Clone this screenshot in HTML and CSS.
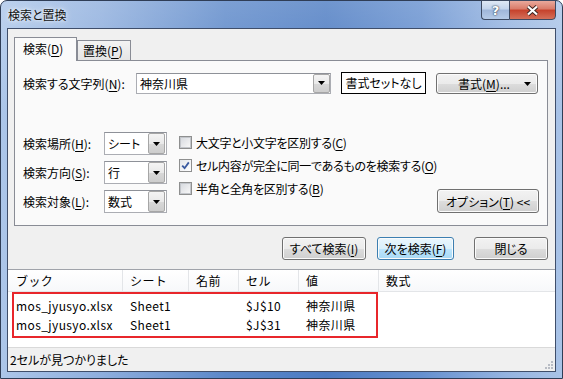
FILE: index.html
```html
<!DOCTYPE html>
<html>
<head>
    <title>検索と置換</title>
<link rel="stylesheet" href="styles.css">
</head>
<body>
    <div class="window">
        <div class="titlebar">
            <span class="title">検索と置換</span>
            <div class="caption">
                <span class="cap help">?</span>
                <span class="cap close">
                    <svg width="13" height="11" viewBox="0 0 13 11"><path d="M2 1.5 L11 9.5 M11 1.5 L2 9.5" stroke="#3a2420" stroke-width="4"/><path d="M2 1.5 L11 9.5 M11 1.5 L2 9.5" stroke="#fff" stroke-width="2.2"/></svg>
                </span>
            </div>
        </div>

        <div class="client">
            <div class="upper">
                <div class="tabs">
                    <div class="tab active">検索(<u>D</u>)</div>
                    <div class="tab">置換(<u>P</u>)</div>
                </div>

                <div class="panel">
                    <div class="find-row">
                        <label class="find-label">検索する文字列(<u>N</u>):</label>
                        <div class="combo find-combo">
                            <span class="combo-text">神奈川県</span>
                            <span class="drop"><svg width="7" height="4" viewBox="0 0 7 4"><polygon points="0,0 7,0 3.5,4" fill="#000"/></svg></span>
                        </div>
                        <div class="fmt-preview">書式セットなし</div>
                        <button class="btn fmt-btn">書式(<u>M</u>)...<svg class="fmt-arrow" width="7" height="4" viewBox="0 0 7 4"><polygon points="0,0 7,0 3.5,4" fill="#000"/></svg></button>
                    </div>

                    <div class="options">
                        <div class="fields">
                            <label>検索場所(<u>H</u>):</label>
                            <div class="combo"><span class="combo-text">シート</span><span class="drop"><svg width="7" height="4" viewBox="0 0 7 4"><polygon points="0,0 7,0 3.5,4" fill="#000"/></svg></span></div>
                            <label>検索方向(<u>S</u>):</label>
                            <div class="combo"><span class="combo-text">行</span><span class="drop"><svg width="7" height="4" viewBox="0 0 7 4"><polygon points="0,0 7,0 3.5,4" fill="#000"/></svg></span></div>
                            <label>検索対象(<u>L</u>):</label>
                            <div class="combo"><span class="combo-text">数式</span><span class="drop"><svg width="7" height="4" viewBox="0 0 7 4"><polygon points="0,0 7,0 3.5,4" fill="#000"/></svg></span></div>
                        </div>

                        <div class="checks">
                            <div class="check"><span class="box"></span>大文字と小文字を区別する(<u>C</u>)</div>
                            <div class="check"><span class="box checked"><svg width="9" height="9" viewBox="0 0 9 9"><path d="M1.2 4.6 L3.6 7.2 L7.8 1.4" stroke="#3a5aa0" stroke-width="1.8" fill="none"/></svg></span>セル内容が完全に同一であるものを検索する(<u>O</u>)</div>
                            <div class="check"><span class="box"></span>半角と全角を区別する(<u>B</u>)</div>
                        </div>

                        <button class="btn opt-btn">オプション(<u>T</u>) &lt;&lt;</button>
                    </div>
                </div>

                <div class="actions">
                    <button class="btn find-all">すべて検索(<u>I</u>)</button>
                    <button class="btn default find-next">次を検索(<u>F</u>)</button>
                    <button class="btn close-btn">閉じる</button>
                </div>
            </div>

            <div class="results">
                <div class="row head">
                    <div class="cell">ブック</div>
                    <div class="cell">シート</div>
                    <div class="cell">名前</div>
                    <div class="cell">セル</div>
                    <div class="cell">値</div>
                    <div class="cell">数式</div>
                </div>
                <div class="rows">
                    <div class="row">
                        <div class="cell">mos_jyusyo.xlsx</div>
                        <div class="cell">Sheet1</div>
                        <div class="cell"></div>
                        <div class="cell">$J$10</div>
                        <div class="cell">神奈川県</div>
                        <div class="cell"></div>
                    </div>
                    <div class="row">
                        <div class="cell">mos_jyusyo.xlsx</div>
                        <div class="cell">Sheet1</div>
                        <div class="cell"></div>
                        <div class="cell">$J$31</div>
                        <div class="cell">神奈川県</div>
                        <div class="cell"></div>
                    </div>
                </div>
                <div class="highlight"></div>
            </div>

            <div class="status">
                <span>2セルが見つかりました</span>
                <svg class="grip" width="10" height="10" viewBox="0 0 10 10">
                    <rect x="7" y="1" width="2" height="2" fill="#b8bcc4"/>
                    <rect x="4" y="4" width="2" height="2" fill="#b8bcc4"/>
                    <rect x="7" y="4" width="2" height="2" fill="#b8bcc4"/>
                    <rect x="1" y="7" width="2" height="2" fill="#b8bcc4"/>
                    <rect x="4" y="7" width="2" height="2" fill="#b8bcc4"/>
                    <rect x="7" y="7" width="2" height="2" fill="#b8bcc4"/>
                </svg>
            </div>
        </div>
    </div>
</body>
</html>
```

FILE: styles.css
```css
* {
    box-sizing: border-box;
}

body {
    margin: 0;
    width: 563px;
    height: 379px;
    overflow: hidden;
    background: #ffffff;
    font-family: "Noto Sans CJK JP", "Noto Sans", sans-serif;
    font-size: 12px;
    font-feature-settings: "palt";
    color: #000;
}

u {
    text-underline-offset: 2px;
}

/* window frame */
.window {
    width: 563px;
    height: 379px;
    border: 1px solid #2f3d56;
    border-radius: 7px 7px 0 0;
    padding: 0 6px 6px 6px;
    display: flex;
    flex-direction: column;
    background:
        linear-gradient(180deg, rgba(255, 255, 255, 0.2), rgba(255, 255, 255, 0) 30%),
        linear-gradient(90deg, #acc6e9 0%, #8eaedd 18%, #5c88c9 40%, #4c7bc2 58%, #6690cf 75%, #94b3e0 90%, #a9c3e7 100%);
}

.titlebar {
    height: 27px;
    display: flex;
    align-items: flex-start;
    position: relative;
}

.title {
    margin: 6px 0 0 1px;
    line-height: 16px;
    color: #111;
    text-shadow: 0 0 6px rgba(255, 255, 255, 0.9), 0 0 3px rgba(255, 255, 255, 0.8);
}

.caption {
    margin: -1px 0 0 auto;
    display: flex;
}

.cap {
    height: 20px;
    border: 1px solid #3d4a62;
    display: flex;
    align-items: center;
    justify-content: center;
}

.help {
    width: 28px;
    border-radius: 0 0 0 4px;
    border-right: none;
    background: linear-gradient(180deg, #dfe8f5 0%, #c3d4ec 45%, #9fb6da 50%, #b6cbe8 100%);
    color: #fff;
    font-family: "DejaVu Sans", sans-serif;
    font-weight: bold;
    font-size: 13px;
    text-shadow: 0 0 2px #283850, 0 0 1px #283850;
}

.close {
    width: 47px;
    border-radius: 0 0 4px 0;
    background: linear-gradient(180deg, #e9a99c 0%, #d97a68 45%, #c6412b 50%, #d4705a 100%);
}

/* client area */
.client {
    flex: 1;
    border: 1px solid #3f4e6a;
    background: #f0f0f0;
    display: flex;
    flex-direction: column;
}

.upper {
    padding: 8px 7px 0 6px;
}

.tabs {
    display: flex;
    align-items: flex-end;
    height: 24px;
    margin-bottom: -1px;
    position: relative;
    z-index: 1;
}

.tab {
    height: 21px;
    width: 54px;
    border: 1px solid #898c95;
    background: linear-gradient(180deg, #f3f3f3, #e5e5e5);
    padding-left: 5px;
    line-height: 19px;
}

.tab.active {
    height: 24px;
    width: 63px;
    border-bottom: none;
    background: #fafafa;
    padding-left: 8px;
    line-height: 22px;
}

.panel {
    height: 166px;
    border: 1px solid #898c95;
    background: #fafafa;
    padding: 11px 0 0 8px;
}

.find-row {
    display: flex;
    align-items: center;
    height: 22px;
}

.find-label {
    width: 113px;
    white-space: nowrap;
}

.combo {
    height: 23px;
    border: 1px solid #abadb3;
    border-top-color: #8e9198;
    background: #fff;
    display: flex;
    align-items: center;
}

.find-combo {
    width: 195px;
    height: 21px;
}

.combo-text {
    flex: 1;
    padding-left: 3px;
}

.drop {
    width: 17px;
    height: 100%;
    border: 1px solid #a6a6a6;
    border-radius: 2px;
    background: linear-gradient(180deg, #f4f4f4 0%, #e9e9e9 50%, #d8d8d8 51%, #cdcdcd 100%);
    display: flex;
    align-items: center;
    justify-content: center;
}

.fmt-preview {
    margin-left: 10px;
    width: 85px;
    height: 22px;
    border: 1px solid #000;
    background: #fff;
    text-align: center;
    line-height: 20px;
    white-space: nowrap;
}

.btn {
    font: inherit;
    color: #000;
    padding: 0;
    white-space: nowrap;
    border: 1px solid #707070;
    border-radius: 3px;
    background: linear-gradient(180deg, #f2f2f2 0%, #ebebeb 50%, #dddddd 51%, #cfcfcf 100%);
    box-shadow: inset 0 0 0 1px #fbfbfb;
}

.btn.default {
    border-color: #3c7fb1;
    background: linear-gradient(180deg, #eaf6fd 0%, #d9f0fc 50%, #bee6fd 51%, #a7d9f5 100%);
}

.fmt-btn {
    margin-left: 10px;
    width: 102px;
    height: 21px;
    position: relative;
    padding-right: 6px;
}

.fmt-arrow {
    position: absolute;
    right: 6px;
    top: 8px;
}

.options {
    margin-top: 38px;
    display: flex;
    align-items: flex-start;
}

.fields {
    flex: none;
    display: grid;
    grid-template-columns: 81px 63px;
    grid-auto-rows: 23px;
    row-gap: 6px;
    align-items: center;
}

.fields label {
    white-space: nowrap;
}

.fields .combo .drop {
    height: 21px;
    margin-right: 1px;
}

.checks {
    flex: 0 0 240px;
    margin: -1px 0 0 12px;
    white-space: nowrap;
    letter-spacing: -0.3px;
}

.check {
    height: 23px;
    display: flex;
    align-items: center;
}

.box {
    flex: none;
    width: 13px;
    height: 13px;
    margin-right: 4px;
    border: 1px solid #8e8f8f;
    background: #f4f4f4;
    display: flex;
    align-items: center;
    justify-content: center;
}

.box::before {
    content: "";
    width: 9px;
    height: 9px;
    border: 1px solid #c3c6cb;
    background: linear-gradient(135deg, #d8dbe0, #f7f7f7);
}

.box.checked::before {
    display: none;
}

.box.checked {
    background: linear-gradient(135deg, #e4e6ea, #ffffff);
}

.opt-btn {
    flex: none;
    margin: 0 9px 0 auto;
    align-self: flex-end;
    width: 102px;
    height: 24px;
}

.actions {
    margin-top: 11px;
    display: flex;
    justify-content: flex-end;
}

.actions .btn {
    height: 23px;
}

.find-all {
    width: 84px;
}

.find-next {
    width: 77px;
    margin-left: 11px;
}

.close-btn {
    width: 74px;
    margin-left: 20px;
}

/* result list */
.results {
    margin-top: 9px;
    height: 78px;
    background: #fff;
    border-top: 1px solid #a0a3aa;
    position: relative;
    font-feature-settings: normal;
}

.row {
    display: grid;
    grid-template-columns: 115px 66px 50px 60px 80px 174px;
    height: 19px;
    align-items: center;
}

.row .cell {
    padding-left: 7px;
    white-space: nowrap;
    letter-spacing: 0.4px;
}

.row .cell:first-child {
    padding-left: 8px;
}

.row.head {
    height: 22px;
    background: linear-gradient(180deg, #ffffff, #f7f8fa);
    border-bottom: 1px solid #e3e5e8;
}

.row.head .cell {
    height: 100%;
    line-height: 21px;
    border-right: 1px solid #e3e5e8;
}

.row.head .cell:last-child {
    border-right: none;
}

.rows {
    padding-top: 4px;
}

.highlight {
    position: absolute;
    left: 4px;
    top: 22px;
    width: 366px;
    height: 46px;
    border: 2px solid #e8262b;
}

.status {
    flex: 1;
    border-top: 1px solid #d9d9d9;
    display: flex;
    align-items: center;
    padding-left: 2px;
    position: relative;
}

.grip {
    position: absolute;
    right: 1px;
    bottom: 1px;
}
```
